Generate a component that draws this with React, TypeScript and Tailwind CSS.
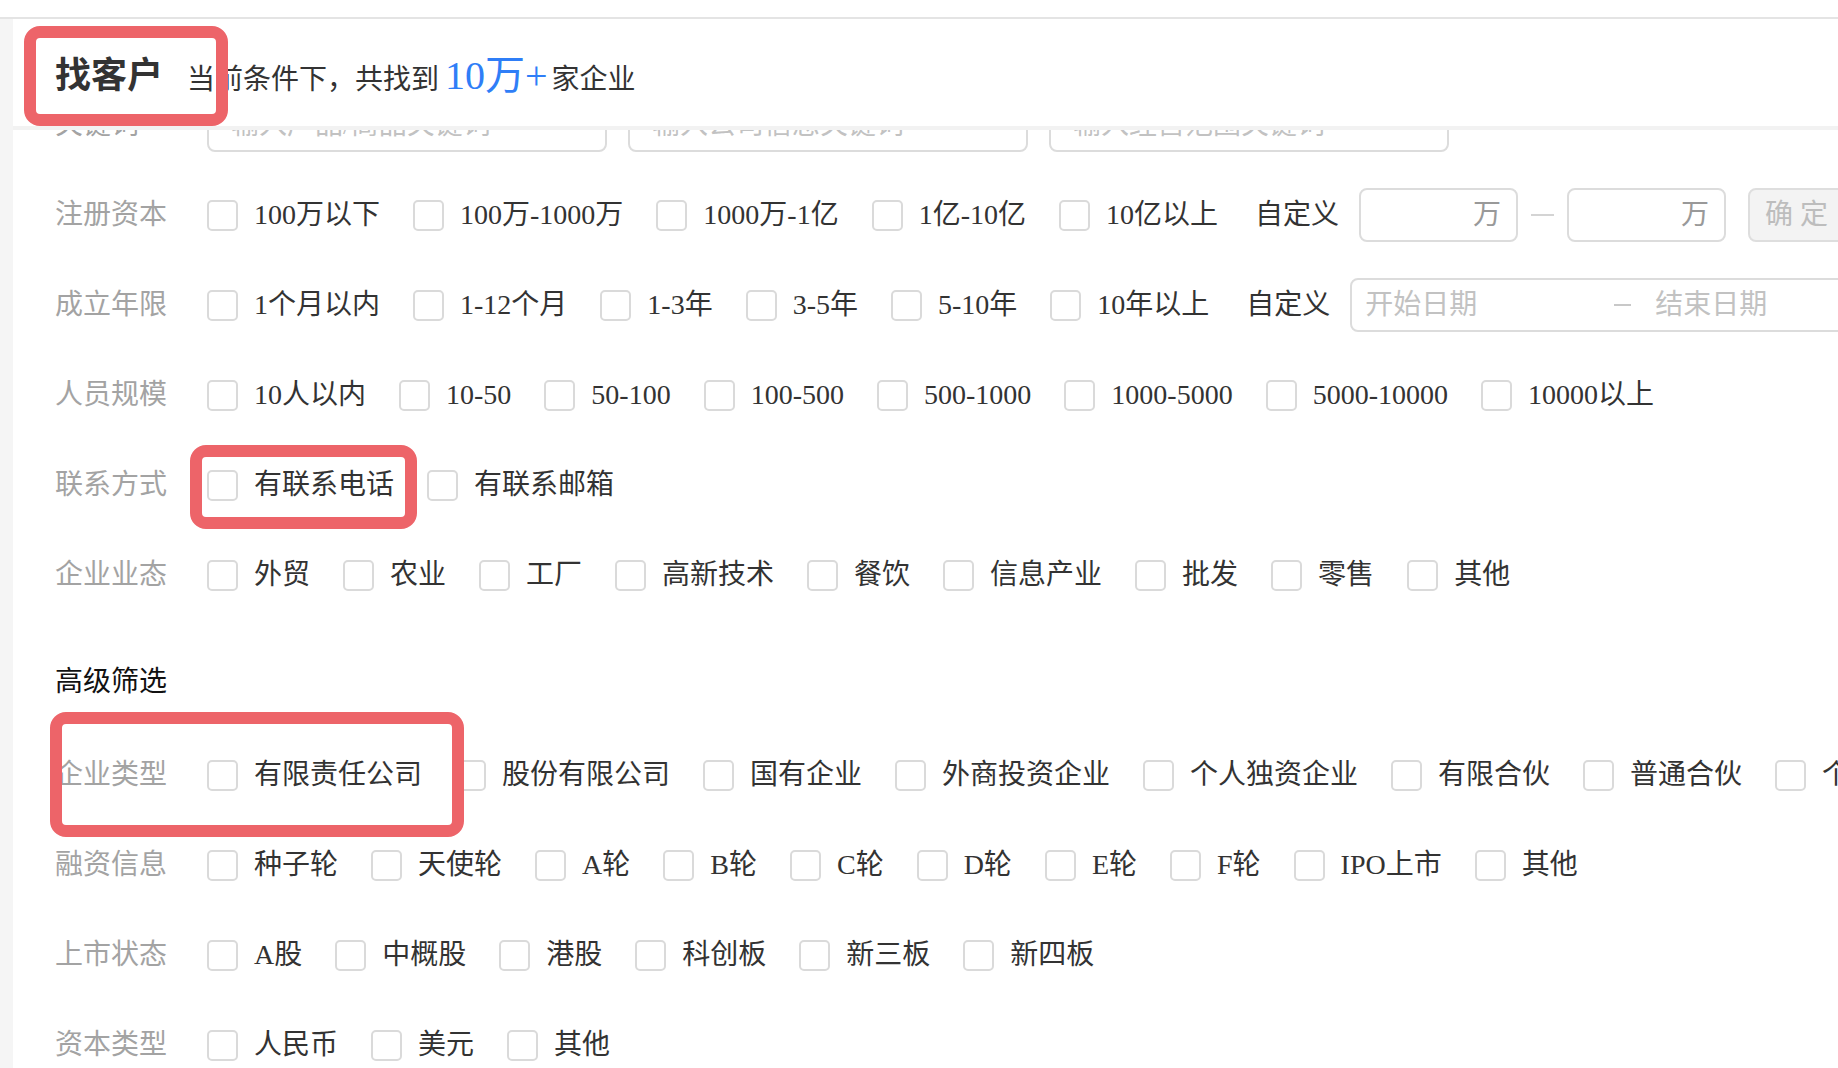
import { useState } from 'react';

interface FilterRow {
  label: string;
  options: string[];
  extra?: 'money' | 'date';
}

const basicRows: FilterRow[] = [
  { label: '注册资本', options: ['100万以下', '100万-1000万', '1000万-1亿', '1亿-10亿', '10亿以上'], extra: 'money' },
  { label: '成立年限', options: ['1个月以内', '1-12个月', '1-3年', '3-5年', '5-10年', '10年以上'], extra: 'date' },
  { label: '人员规模', options: ['10人以内', '10-50', '50-100', '100-500', '500-1000', '1000-5000', '5000-10000', '10000以上'] },
  { label: '联系方式', options: ['有联系电话', '有联系邮箱'] },
  { label: '企业业态', options: ['外贸', '农业', '工厂', '高新技术', '餐饮', '信息产业', '批发', '零售', '其他'] },
];

const advancedRows: FilterRow[] = [
  { label: '企业类型', options: ['有限责任公司', '股份有限公司', '国有企业', '外商投资企业', '个人独资企业', '有限合伙', '普通合伙', '个体工商户'] },
  { label: '融资信息', options: ['种子轮', '天使轮', 'A轮', 'B轮', 'C轮', 'D轮', 'E轮', 'F轮', 'IPO上市', '其他'] },
  { label: '上市状态', options: ['A股', '中概股', '港股', '科创板', '新三板', '新四板'] },
  { label: '资本类型', options: ['人民币', '美元', '其他'] },
];

const keywordPlaceholders = ['输入产品/商品关键词', '输入公司信息关键词', '输入经营范围关键词'];

function CheckOption({ text, checked, onToggle }: { text: string; checked: boolean; onToggle: () => void }) {
  return (
    <label className="flex shrink-0 cursor-pointer items-center" onClick={onToggle}>
      <span
        className={
          checked
            ? 'flex h-[31px] w-[31px] items-center justify-center rounded-[5px] border-2 border-[#2f7ef7] bg-[#2f7ef7]'
            : 'flex h-[31px] w-[31px] items-center justify-center rounded-[5px] border-2 border-[#dadada] bg-white'
        }
      >
        {checked && (
          <svg width="18" height="18" viewBox="0 0 24 24" fill="none" stroke="#fff" strokeWidth="3">
            <path d="M4 12l5 5L20 6" />
          </svg>
        )}
      </span>
      <span className="ml-[16px] text-[28px] text-[#333]">{text}</span>
    </label>
  );
}

function MoneyRange() {
  return (
    <div className="ml-[37px] flex shrink-0 items-center">
      <span className="text-[28px] text-[#333]">自定义</span>
      <div className="ml-[20px] flex h-[54px] w-[159px] items-center justify-end rounded-lg border-2 border-[#dcdcdc] pr-[15px] text-[28px] text-[#999]">
        万
      </div>
      <span className="mx-[13px] h-[2px] w-[23px] bg-[#d4d4d4]" />
      <div className="flex h-[54px] w-[159px] items-center justify-end rounded-lg border-2 border-[#dcdcdc] pr-[15px] text-[28px] text-[#999]">
        万
      </div>
      <button className="ml-[22px] h-[54px] w-[110px] shrink-0 rounded-lg border-2 border-[#dedede] bg-[#f3f3f3] pl-[15px] text-left text-[28px] text-[#bdbdbd]">
        确 定
      </button>
    </div>
  );
}

function DateRange() {
  return (
    <div className="ml-[37px] flex shrink-0 items-center">
      <span className="text-[28px] text-[#333]">自定义</span>
      <div className="ml-[20px] flex h-[54px] w-[560px] items-center rounded-lg border-2 border-[#dcdcdc] px-[13px] text-[28px] text-[#c2c2c2]">
        <span className="w-[249px]">开始日期</span>
        <span className="h-[2px] w-[17px] bg-[#c8c8c8]" />
        <span className="ml-[24px]">结束日期</span>
      </div>
    </div>
  );
}

export default function App() {
  const [checked, setChecked] = useState<Record<string, boolean>>({});

  const toggle = (key: string) => {
    setChecked({
      ...checked,
      [key]: !checked[key],
    });
  };

  const renderRow = (row: FilterRow) => (
    <div key={row.label} className="flex h-[90px] items-center whitespace-nowrap">
      <span className="w-[152px] shrink-0 text-[28px] text-[#a3a3a3]">{row.label}</span>
      <div className="flex shrink-0 items-center gap-[33px]">
        {row.options.map((opt) => (
          <CheckOption
            key={opt}
            text={opt}
            checked={!!checked[`${row.label}-${opt}`]}
            onToggle={() => toggle(`${row.label}-${opt}`)}
          />
        ))}
      </div>
      {row.extra === 'money' && <MoneyRange />}
      {row.extra === 'date' && <DateRange />}
    </div>
  );

  return (
    <div className="relative h-[1068px] w-full overflow-hidden bg-white font-['Liberation_Serif','Noto_Sans_CJK_SC',serif]">
      {/* top bar */}
      <div className="h-[19px] border-b-2 border-[#e4e4e4] bg-white" />

      <div className="flex h-[1049px]">
        <div className="w-[13px] shrink-0 bg-[#f5f5f5]" />

        <main className="relative flex-1 overflow-hidden">
          {/* Header */}
          <div className="absolute inset-x-0 top-0 z-10 flex h-[111px] items-center border-b-4 border-[#f2f2f2] bg-white pl-[42px] pt-[6px] whitespace-nowrap">
            <h1 className="text-[36px] font-bold text-[#333]">找客户</h1>
            <p className="ml-[24px] flex items-baseline text-[28px] text-[#333]">
              当前条件下，共找到
              <span className="ml-[6px] mr-[4px] text-[40px] text-[#2f7ef7]">10万+</span>
              家企业
            </p>
          </div>

          {/* Filters */}
          <div className="pl-[42px] pt-[61px]">
            <div className="flex h-[90px] items-center whitespace-nowrap">
              <span className="w-[152px] shrink-0 text-[28px] text-[#a3a3a3]">关键词</span>
              <div className="flex shrink-0 gap-[21px]">
                {keywordPlaceholders.map((ph) => (
                  <input
                    key={ph}
                    placeholder={ph}
                    className="h-[54px] w-[400px] rounded-lg border-2 border-[#dcdcdc] px-[22px] text-[28px] text-[#333] outline-none placeholder:text-[#c2c2c2]"
                  />
                ))}
              </div>
            </div>

            {basicRows.map(renderRow)}

            <div className="h-[110px] pt-[41px] text-[28px] leading-[42px] text-[#111]">高级筛选</div>

            {advancedRows.map(renderRow)}
          </div>
        </main>
      </div>

      {/* Highlight frames */}
      <div className="pointer-events-none absolute left-[24px] top-[26px] z-20 h-[100px] w-[204px] rounded-[16px] border-[12px] border-[#ed6469]" />
      <div className="pointer-events-none absolute left-[190px] top-[445px] z-20 h-[84px] w-[227px] rounded-[16px] border-[12px] border-[#ed6469]" />
      <div className="pointer-events-none absolute left-[50px] top-[712px] z-20 h-[125px] w-[414px] rounded-[16px] border-[12px] border-[#ed6469]" />
    </div>
  );
}
